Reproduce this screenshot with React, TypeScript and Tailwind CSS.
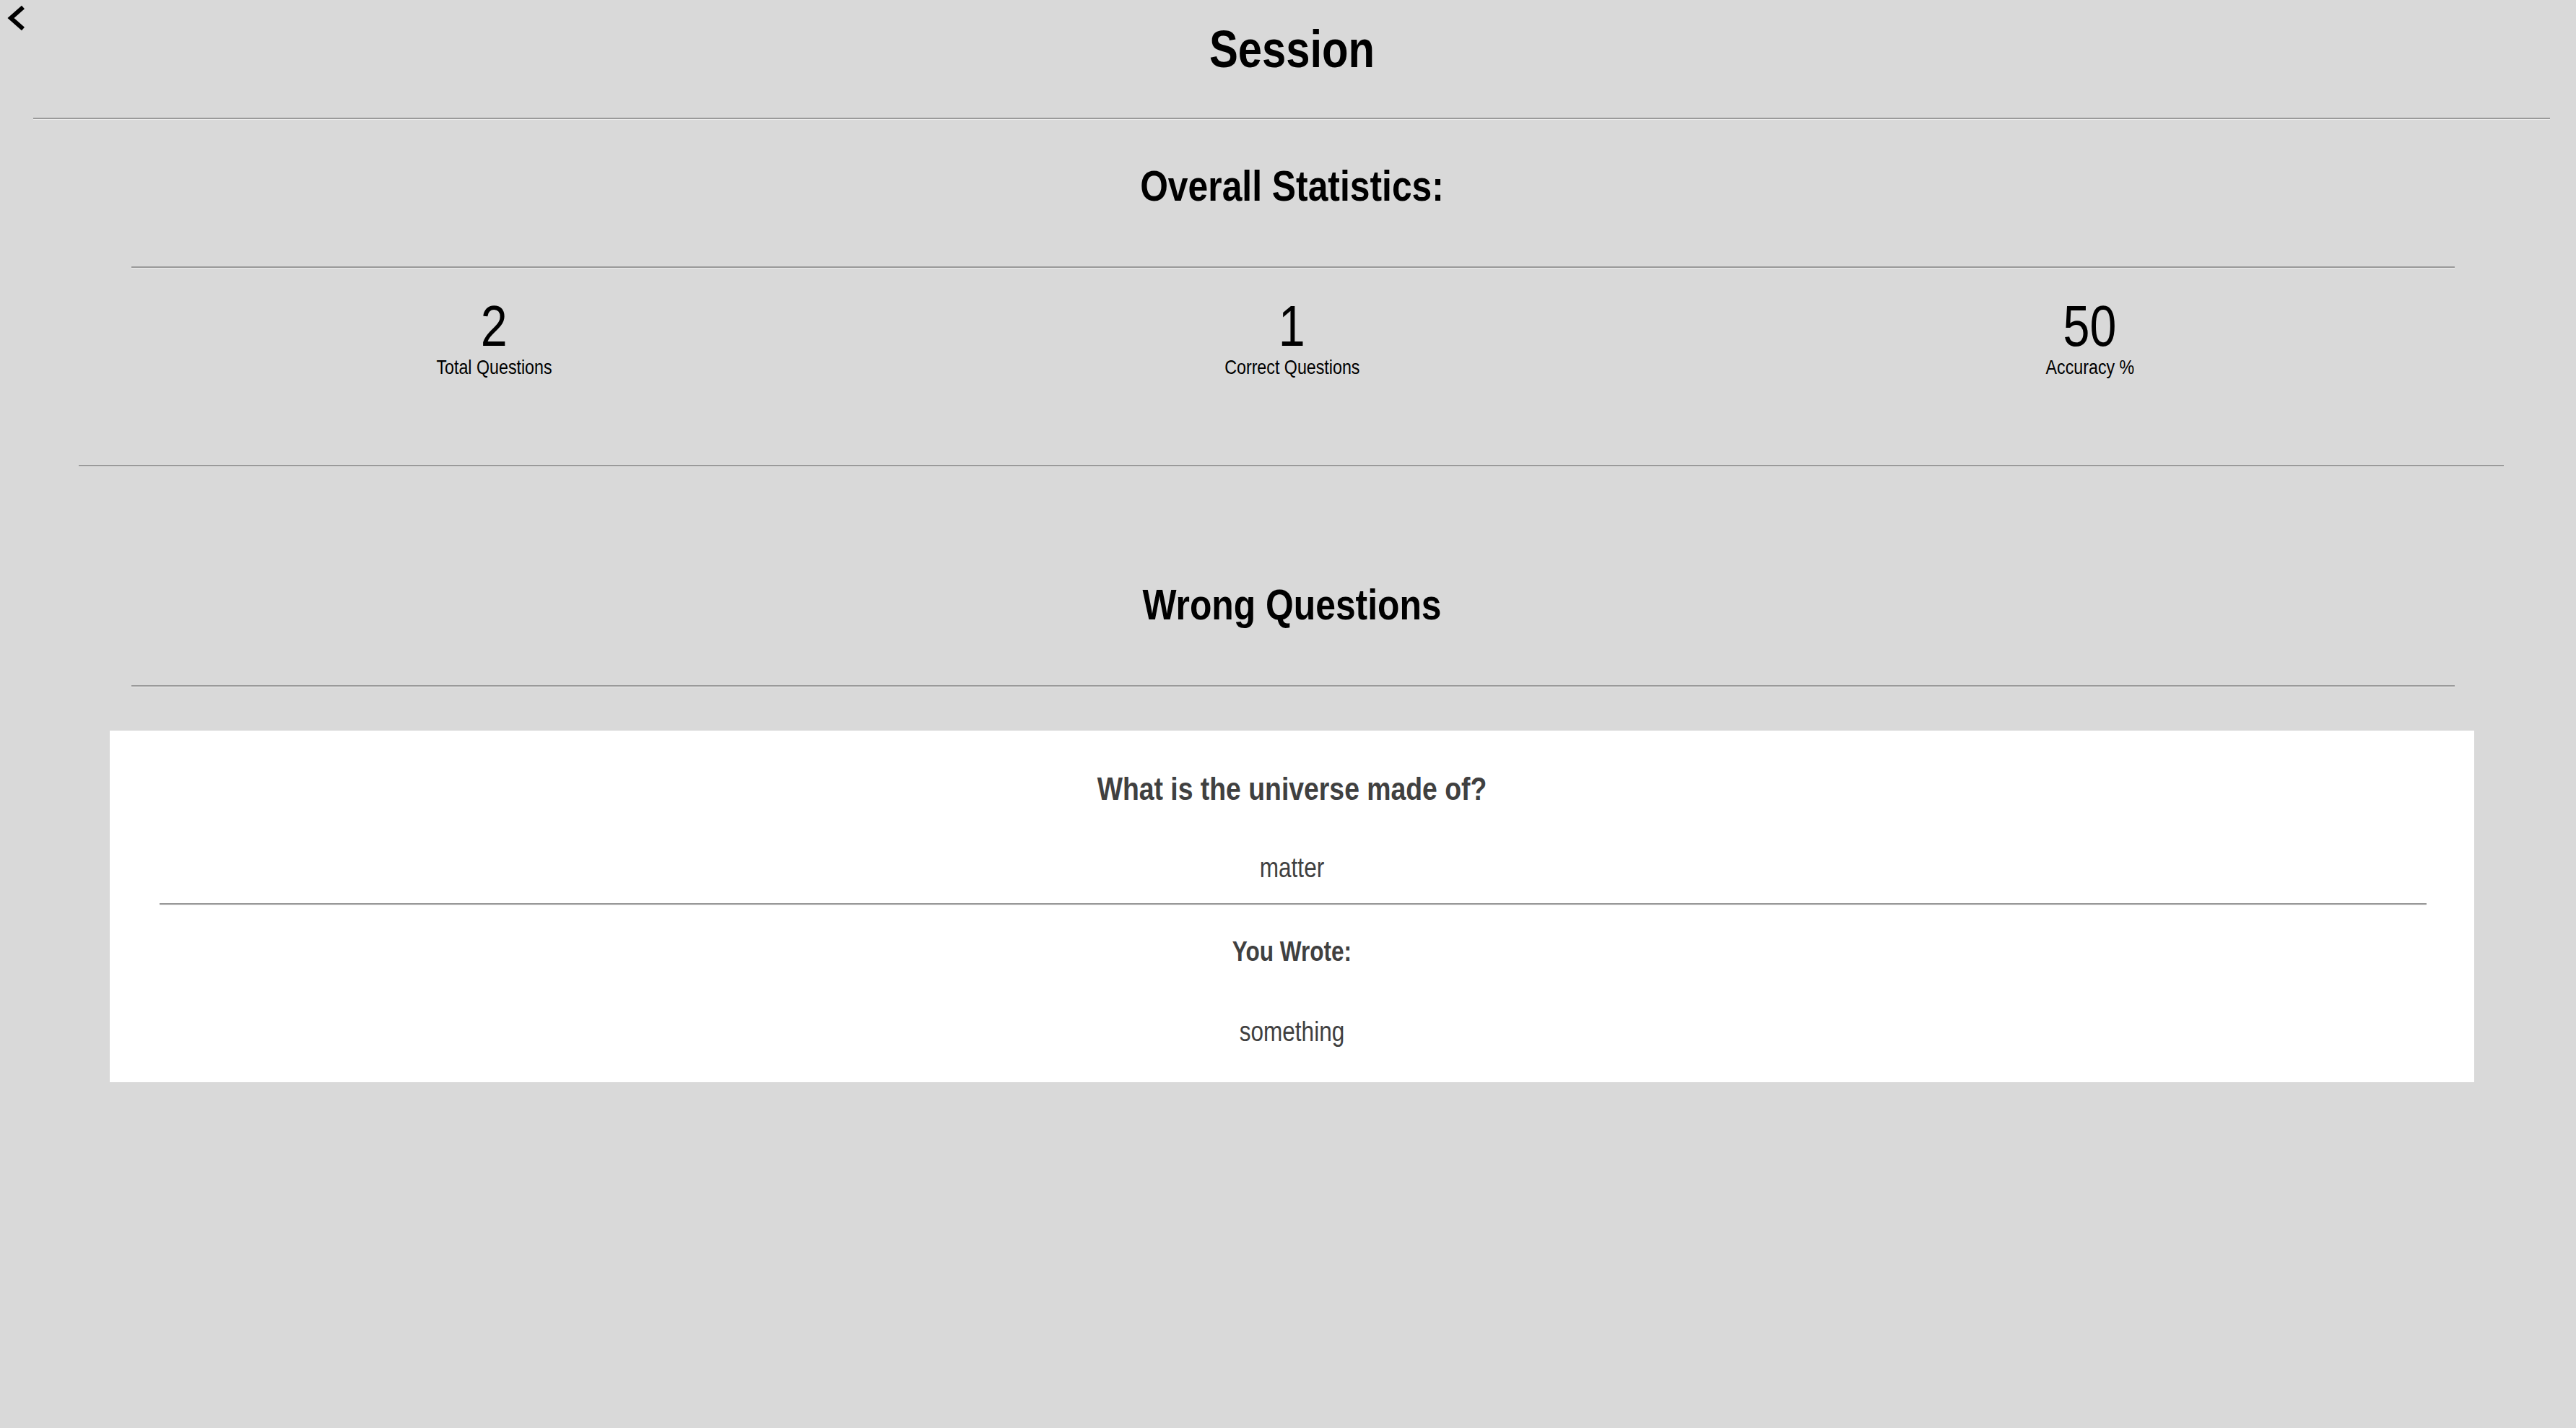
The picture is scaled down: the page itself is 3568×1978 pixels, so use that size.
import React from "react";

function Hr({ className }: { className: string }) {
  return <div className={"h-0 border-t-2 border-t-[#9a9a9a] border-b border-b-[#ececec] " + className} />;
}

function Stat({ value, label }: { value: string; label: string }) {
  return (
    <div className="flex flex-col items-center">
      <div className="scale-x-[0.83] text-[80px] leading-[80px] text-black">{value}</div>
      <div className="mt-[3px] scale-x-[0.83] text-[28px] leading-[28px] text-black">{label}</div>
    </div>
  );
}

export default function App() {
  return (
    <div className="relative min-h-screen bg-[#d9d9d9] pl-[11px] pb-[200px] font-['Liberation_Sans',Arial,sans-serif]">
      <button className="absolute left-0 top-0 h-[48px] w-[48px]" aria-label="Back">
        <svg width="48" height="48" viewBox="0 0 48 48">
          <polyline points="32,10 15,25 32,40" fill="none" stroke="#000" strokeWidth="6" strokeLinejoin="miter" />
        </svg>
      </button>

      <h1 className="scale-x-[0.83] pt-[32px] text-center text-[72px] font-bold leading-[72px] text-black">Session</h1>
      <Hr className="mt-[59px] ml-[35px] mr-[36px]" />

      <h2 className="mt-[62px] scale-x-[0.83] text-center text-[60px] font-bold leading-[60px] text-black">Overall Statistics:</h2>
      <Hr className="mt-[81px] ml-[171px] mr-[168px]" />

      <div className="mx-[121px] mt-[40px] grid grid-cols-3">
        <Stat value="2" label="Total Questions" />
        <Stat value="1" label="Correct Questions" />
        <Stat value="50" label="Accuracy %" />
      </div>

      <Hr className="mt-[121px] ml-[98px] mr-[100px]" />

      <h2 className="mt-[161px] scale-x-[0.83] text-center text-[60px] font-bold leading-[60px] text-black">Wrong Questions</h2>
      <Hr className="mt-[81px] ml-[171px] mr-[168px]" />

      <div className="mt-[60px] ml-[141px] mr-[141px] bg-white pt-[58px] pb-[51px] text-[#404040]">
        <div className="scale-x-[0.83] text-center text-[45px] font-bold leading-[45px]">What is the universe made of?</div>
        <div className="mt-[68px] scale-x-[0.83] text-center text-[38px] leading-[38px]">matter</div>
        <Hr className="mt-[30px] ml-[69px] mr-[66px] border-t-[#979797] border-b-[#f0f0f0]" />
        <div className="mt-[45px] scale-x-[0.83] text-center text-[38px] font-bold leading-[38px]">You Wrote:</div>
        <div className="mt-[73px] scale-x-[0.83] text-center text-[38px] leading-[38px]">something</div>
      </div>
    </div>
  );
}
